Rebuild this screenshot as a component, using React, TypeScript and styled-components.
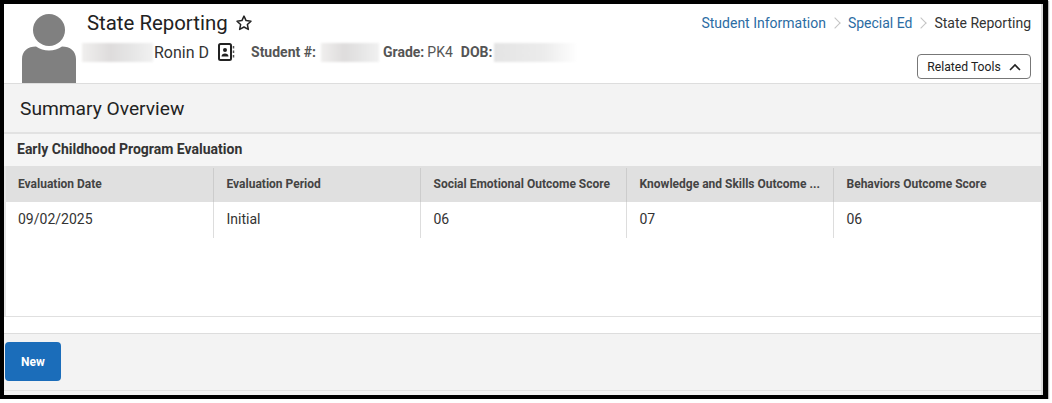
import React from 'react';
import styled, { createGlobalStyle } from 'styled-components';

const GlobalStyle = createGlobalStyle`
  html, body {
    margin: 0;
    padding: 0;
    background: #ffffff;
    font-family: Roboto, "Liberation Sans", sans-serif;
  }
`;

const columns = [
  { title: 'Evaluation Date', value: '09/02/2025' },
  { title: 'Evaluation Period', value: 'Initial' },
  { title: 'Social Emotional Outcome Score', value: '06' },
  { title: 'Knowledge and Skills Outcome ...', value: '07' },
  { title: 'Behaviors Outcome Score', value: '06' },
];

const Avatar = () => (
  <AvatarSvg viewBox="0 0 54 69">
    <circle cx="27" cy="16" r="16" fill="#808080" />
    <path
      d="M0 69V45C0 37 6 32.500 14 32.500C18 35 22 36.500 27 36.500C32 36.500 36 35 40 32.500C48 32.500 54 37 54 45V69Z"
      fill="#808080"
    />
  </AvatarSvg>
);

const ContactIcon = () => (
  <svg width="20" height="20" viewBox="0 0 20 20" fill="none">
    <rect x="2" y="2" width="12" height="16" rx="1.500" stroke="#222" strokeWidth="2" />
    <circle cx="8" cy="8" r="2" fill="#222" />
    <path d="M4.500 14.500c0-2 1.500-3 3.500-3s3.500 1 3.500 3z" fill="#222" />
    <path d="M16.500 4v2.500M16.500 8.500v2.500M16.500 13v2.500" stroke="#555" strokeWidth="1.500" />
  </svg>
);

const App: React.FC = () => {
  return (
    <>
      <GlobalStyle />
      <Frame>
        <Header>
          <Avatar />
          <HeaderMain>
            <TitleRow>
              <Title>State Reporting</Title>
              <svg width="18" height="18" viewBox="0 0 24 24" fill="none" stroke="#222" strokeWidth="2" strokeLinejoin="round">
                <path d="M12 2.800l2.800 6 6.500.8-4.800 4.500 1.300 6.500-5.800-3.300-5.800 3.300 1.300-6.500-4.800-4.500 6.500-.8z" />
              </svg>
            </TitleRow>
            <StudentRow>
              <Redacted $width={71} $fade={false} />
              <StudentName>Ronin D</StudentName>
              <ContactIcon />
              <Label $gap={14} $after={5}>Student #:</Label>
              <Redacted $width={58} $fade={false} />
              <Label $gap={4} $after={3}>Grade:</Label>
              <Value>PK4</Value>
              <Label $gap={8} $after={2}>DOB:</Label>
              <Redacted $width={84} $fade />
            </StudentRow>
          </HeaderMain>
          <HeaderSide>
            <Breadcrumbs>
              <Crumb>Student Information</Crumb>
              <CrumbArrow />
              <Crumb>Special Ed</Crumb>
              <CrumbArrow />
              <CurrentCrumb>State Reporting</CurrentCrumb>
            </Breadcrumbs>
            <ToolsButton>
              Related Tools
              <svg width="12" height="8" viewBox="1 0 12 8" fill="none" stroke="#222" strokeWidth="1.600">
                <path d="M2 7l5-5 5 5" />
              </svg>
            </ToolsButton>
          </HeaderSide>
        </Header>
        <OverviewBar>Summary Overview</OverviewBar>
        <SectionTitle>Early Childhood Program Evaluation</SectionTitle>
        <Table>
          <HeadRow>
            {columns.map((col) => (
              <HeadCell key={col.title}>{col.title}</HeadCell>
            ))}
          </HeadRow>
          <BodyRow>
            {columns.map((col) => (
              <BodyCell key={col.title}>{col.value}</BodyCell>
            ))}
          </BodyRow>
        </Table>
        <Spacer />
        <ActionBar>
          <NewButton>New</NewButton>
        </ActionBar>
        <BottomStrip />
      </Frame>
    </>
  );
};

export default App;

const Frame = styled.div`
  box-sizing: border-box;
  width: 1048px;
  height: 399px;
  border-style: solid;
  border-color: #000000;
  border-width: 4px 5px 4px 4px;
  padding-right: 2px;
  background: #dcdcdc;
  box-shadow: 1px 1px 1px #bbbbbb;
  display: flex;
  flex-direction: column;
  color: #222222;
  overflow: hidden;
`;

const Header = styled.header`
  box-sizing: border-box;
  flex: none;
  height: 80px;
  display: flex;
  align-items: flex-start;
  padding: 0 10px 0 18px;
  background: #ffffff;
  border-bottom: 1px solid #dddddd;
`;

const AvatarSvg = styled.svg`
  flex: none;
  width: 54px;
  height: 69px;
  margin-top: 10px;
`;

const HeaderMain = styled.div`
  flex: 1;
  padding: 6px 0 0 11px;
`;

const TitleRow = styled.div`
  display: flex;
  align-items: center;
  gap: 7px;
  height: 26px;
`;

const Title = styled.h1`
  margin: 0;
  font-size: 20.400px;
  font-weight: 400;
  color: #222222;
`;

const StudentRow = styled.div`
  display: flex;
  align-items: center;
  height: 22px;
  margin: 5px 0 0 -5px;
  font-size: 14px;
`;

const Redacted = styled.span<{ $width: number; $fade: boolean }>`
  flex: none;
  width: ${(props) => props.$width}px;
  height: 19px;
  filter: blur(1px);
  background: ${(props) =>
    props.$fade
      ? 'linear-gradient(90deg, #e4e4e4 0%, #ececec 60%, #ffffff 100%)'
      : 'linear-gradient(90deg, #f0efee 0%, #dedcdc 40%, #e6e6e6 70%, #f1f1f1 100%)'};
`;

const StudentName = styled.span`
  margin: 0 8px 0 1px;
  font-size: 16px;
  color: #333333;
`;

const Label = styled.span<{ $gap: number; $after: number }>`
  margin-left: ${(props) => props.$gap}px;
  margin-right: ${(props) => props.$after}px;
  font-weight: 700;
  color: #555555;
`;

const Value = styled.span`
  color: #555555;
`;

const HeaderSide = styled.div`
  display: flex;
  flex-direction: column;
  align-items: flex-end;
  padding-top: 11px;
`;

const Breadcrumbs = styled.nav`
  display: flex;
  align-items: center;
  height: 16px;
  font-size: 14px;
`;

const Crumb = styled.span`
  color: #2b6ca3;
`;

const CurrentCrumb = styled.span`
  color: #333333;
`;

const CrumbArrow = styled.span`
  box-sizing: border-box;
  width: 8px;
  height: 8px;
  margin: 0 9px 0 5px;
  border-top: 1.500px solid #c4c4c4;
  border-right: 1.500px solid #c4c4c4;
  transform: rotate(45deg);
`;

const ToolsButton = styled.button`
  box-sizing: border-box;
  width: 114px;
  height: 25px;
  margin-top: 23px;
  padding: 0;
  display: flex;
  align-items: center;
  justify-content: center;
  gap: 8px;
  border: 1px solid #777777;
  border-radius: 4px;
  background: #ffffff;
  font-family: inherit;
  font-size: 12.200px;
  color: #222222;
`;

const OverviewBar = styled.div`
  box-sizing: border-box;
  flex: none;
  height: 50px;
  padding: 14px 0 0 16px;
  background: #f3f3f3;
  border-bottom: 2px solid #e2e2e2;
  font-size: 19.200px;
  line-height: 22px;
  color: #222222;
`;

const SectionTitle = styled.h2`
  box-sizing: border-box;
  flex: none;
  height: 32px;
  margin: 0;
  padding: 7px 0 0 13px;
  background: #f5f5f5;
  font-size: 14px;
  font-weight: 700;
  line-height: 17px;
  color: #333333;
`;

const Table = styled.div`
  box-sizing: border-box;
  flex: none;
  height: 151px;
  background: #ffffff;
  border-left: 2px solid #e6e6e6;
`;

const rowGrid = `
  display: grid;
  grid-template-columns: 208px 207px 206px 207px 1fr;
  height: 36px;
`;

const HeadRow = styled.div`
  ${rowGrid}
  background: #e0e0e0;
`;

const HeadCell = styled.div`
  display: flex;
  align-items: center;
  padding: 0 0 2px 12.500px;
  margin-top: 2px;
  height: 32px;
  font-size: 12px;
  font-weight: 700;
  white-space: nowrap;
  color: #444444;
  border-right: 1px solid #cccccc;

  &:first-child {
    padding-left: 12px;
  }

  &:last-child {
    border-right: none;
  }
`;

const BodyRow = styled.div`
  ${rowGrid}
`;

const BodyCell = styled.div`
  display: flex;
  align-items: center;
  padding: 0 0 2px 12.500px;
  font-size: 14px;
  color: #333333;
  border-right: 1px solid #dddddd;

  &:first-child {
    padding-left: 12px;
  }

  &:last-child {
    border-right: none;
  }
`;

const Spacer = styled.div`
  flex: none;
  height: 16px;
  background: #ffffff;
  border-top: 1px solid #e0e0e0;
  margin-top: -1px;
`;

const ActionBar = styled.div`
  box-sizing: border-box;
  flex: none;
  height: 58px;
  padding: 8px 0 0 1px;
  background: #f3f3f3;
  border-top: 1px solid #dddddd;
  border-bottom: 1px solid #e2e2e2;
`;

const NewButton = styled.button`
  width: 56px;
  height: 39px;
  padding: 0;
  border: none;
  border-radius: 4px;
  background: #1b6dba;
  color: #ffffff;
  font-family: inherit;
  font-size: 12px;
  font-weight: 700;
`;

const BottomStrip = styled.div`
  flex: 1;
  background: #f3f3f3;
`;
